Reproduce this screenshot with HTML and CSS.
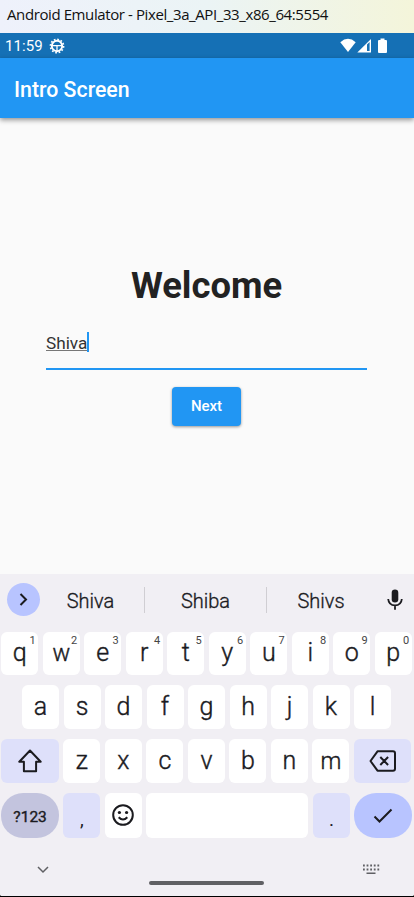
FILE: index.html
```
<!DOCTYPE html>
<html lang="en">
<head>
<meta charset="utf-8">
<title>Intro Screen</title>
<link rel="stylesheet" href="styles.css">
</head>
<body>
<div class="window">
  <div class="titlebar"><span>Android Emulator - Pixel_3a_API_33_x86_64:5554</span></div>
  <div class="status">
    <span class="clock">11:59</span>
    <svg class="gear" width="16" height="16" viewBox="0 0 16 16" fill="none" stroke="#fff"><circle cx="8" cy="8" r="5.2" stroke-width="1.900"/><circle cx="8" cy="8" r="6.600" stroke-width="1.600" stroke-dasharray="1.730 1.730"/><path d="M3 7.600h10M8 7.600V13" stroke-width="1.300"/></svg>
    <svg class="signals" width="48" height="16" viewBox="0 0 48 16" fill="#fff"><path d="M.3 4.200Q8-2.600 15.700 4.200L8 14z"/><path d="M17.300 14.500L31 1v13.500z"/><path d="M27 6.500L29.600 4v9H27z" fill="#1570b5"/><path d="M40.500.5h4V2H46q1 0 1 1v11q0 1-1 1h-7q-1 0-1-1V3q0-1 1-1h1.500z"/></svg>
  </div>
  <header class="appbar"><span>Intro Screen</span></header>
  <main class="content">
    <h1>Welcome</h1>
    <div class="field"><span class="value">Shiva</span><span class="caret"></span></div>
    <button class="next">Next</button>
  </main>
  <section class="keyboard">
    <div class="suggestions">
      <span class="expand"><svg width="33" height="33" viewBox="0 0 33 33" fill="none" stroke="#1b1b1f" stroke-width="2"><path d="M13.500 11l5.500 5.500-5.500 5.500"/></svg></span>
      <span class="word first">Shiva</span>
      <span class="word">Shiba</span>
      <span class="word last">Shivs</span>
      <svg class="mic" width="16" height="22" viewBox="0 0 16 22"><rect x="4.700" y=".5" width="6.600" height="13" rx="3.300" fill="#1b1b1f"/><path d="M1.200 10q.5 6.300 6.800 6.300T14.800 10M8 16v4.700" fill="none" stroke="#1b1b1f" stroke-width="1.800"/></svg>
    </div>
    <div class="row r1">
      <span class="key">q<i>1</i></span><span class="key broad">w<i>2</i></span><span class="key">e<i>3</i></span><span class="key">r<i>4</i></span><span class="key">t<i>5</i></span><span class="key">y<i>6</i></span><span class="key">u<i>7</i></span><span class="key">i<i>8</i></span><span class="key">o<i>9</i></span><span class="key">p<i>0</i></span>
    </div>
    <div class="row r2">
      <span class="key">a</span><span class="key">s</span><span class="key">d</span><span class="key">f</span><span class="key">g</span><span class="key">h</span><span class="key">j</span><span class="key">k</span><span class="key">l</span>
    </div>
    <div class="row r3">
      <span class="key wide tint"><svg width="26" height="24" viewBox="0 0 26 24" fill="none" stroke="#1b1b1f" stroke-width="2" stroke-linejoin="round"><path d="M13 1.500L2.300 12.700h4.600v9.600h12.200v-9.600h4.600z"/></svg></span>
      <span class="key">z</span><span class="key">x</span><span class="key">c</span><span class="key">v</span><span class="key">b</span><span class="key">n</span><span class="key broad">m</span>
      <span class="key wide tint"><svg width="28" height="22" viewBox="0 0 28 22" fill="none" stroke="#1b1b1f" stroke-width="2" stroke-linejoin="round"><path d="M8.500 1.300H24q2 0 2 2v15.400q0 2-2 2H8.500L1.500 11zM11.300 7l7.800 8M19.100 7l-7.800 8"/></svg></span>
    </div>
    <div class="row r4">
      <span class="key wide symbols">?123</span>
      <span class="key tint punct comma">,</span>
      <span class="key"><svg width="24" height="24" viewBox="0 0 24 24" fill="none" stroke="#1b1b1f" stroke-width="2"><circle cx="12" cy="12" r="9.800"/><path d="M7.700 14.200q4.300 4.600 8.600 0"/><g fill="#1b1b1f" stroke="none"><circle cx="8.400" cy="9.500" r="1.600"/><circle cx="15.600" cy="9.500" r="1.600"/></g></svg></span>
      <span class="key space"></span>
      <span class="key tint punct">.</span>
      <span class="key wide enter"><svg width="20" height="16" viewBox="0 0 20 16" fill="none" stroke="#1b1b1f" stroke-width="2"><path d="M1.500 8.500l5 5L18.500 1.500"/></svg></span>
    </div>
    <div class="nav">
      <svg class="down" width="12" height="8" viewBox="0 0 12 8" fill="none" stroke="#606064" stroke-width="1.500"><path d="M1 1l5 5 5-5"/></svg>
      <span class="handle"></span>
      <svg class="ime" width="18" height="11" viewBox="0 0 18 11" fill="none" stroke="#606064"><path d="M1 1.500h17M1 5.500h17" stroke-width="1.800" stroke-dasharray="1.800 1.800"/><path d="M4.500 9.300h9" stroke-width="1.500"/></svg>
    </div>
  </section>
</div>
</body>
</html>
```

FILE: styles.css
```
* { box-sizing: border-box; }
body { margin: 0; background: #000; font-family: Roboto, sans-serif; }
.window { width: 414px; height: 896px; display: flex; flex-direction: column; overflow: hidden; background: #fafafa; border-radius: 0 0 2px 2px; }
svg { display: block; flex: none; }
.titlebar { height: 33px; flex: none; padding: 3px 7px; font: 15px/22px "Open Sans", "Noto Sans", sans-serif; color: #111; background: linear-gradient(90deg, #eef1fb, #ebf4f5 50%, #f4f5da); white-space: nowrap; letter-spacing: -.4px; }
.status { height: 25px; flex: none; display: flex; align-items: center; padding: 0 26px 0 5px; background: #1570b5; color: #fff; }
.clock { font-size: 15px; line-height: 25px; letter-spacing: .1px; padding-top: 1px; }
.gear { margin-left: 6px; }
.signals { margin-left: auto; }
.appbar { height: 60px; flex: none; padding-left: 14px; background: #2196f3; color: #fff; font-size: 21.300px; font-weight: 500; line-height: 63px; box-shadow: 0 2px 5px rgba(0,0,0,.42); position: relative; }
.content { height: 456px; flex: none; display: flex; flex-direction: column; align-items: center; padding: 144px 1px 0 0; }
h1 { margin: 0; font-size: 36.400px; line-height: 47px; font-weight: 700; color: #222; }
.field { margin-top: 16px; width: 321px; height: 45px; border-bottom: 2px solid #2196f3; display: flex; align-items: flex-start; padding-top: 7px; font-size: 17.200px; line-height: 22px; color: #333; }
.value { border-bottom: 1px solid #777; height: 19px; }
.caret { width: 2px; height: 20px; margin-top: 0; background: #2196f3; }
.next { margin-top: 17px; width: 69px; height: 39px; border: 0; border-radius: 4px; background: #2196f3; color: #fff; font: 500 15px Roboto, sans-serif; box-shadow: 0 1px 3px rgba(0,0,0,.4); padding: 0 0 1px; }
.keyboard { height: 322px; flex: none; background: #f1eff4; color: #1b1b1f; }
.suggestions { height: 58px; display: flex; align-items: center; padding: 0 11px 7px 7px; font-size: 20px; font-weight: 300; -webkit-text-stroke: .35px; }
.expand { width: 33px; height: 33px; border-radius: 50%; background: #b8c4ff; }
.word { height: 26px; line-height: 28px; width: 122px; text-align: center; border-right: 1px solid #d0ced3; }
.word.first { width: 105px; padding-right: 3px; }
.word.last { width: 108px; border: 0; }
.mic { margin-left: auto; }
.row { display: flex; gap: 4.500px; padding: 0 1.300px; margin-bottom: 10px; height: 44px; }
.key { position: relative; flex: none; width: 37px; height: 100%; background: #fff; border-radius: 6px; display: flex; align-items: center; justify-content: center; font-size: 25px; font-weight: 300; -webkit-text-stroke: .4px; line-height: 30px; padding-bottom: 1px; }
.key.broad { font-size: 23.500px; }
.key i { position: absolute; top: 3px; right: 2.500px; font: 11px/12px Roboto, sans-serif; color: #444; -webkit-text-stroke: 0; }
.r1 { height: 43px; }
.r2 { padding-left: 22px; }
.r4 { height: 45px; }
.key.wide { width: 57.600px; padding: 0; }
.key.tint { background: #dee0fa; }
.key.symbols { border-radius: 22px; background: #c3c4de; font-size: 15.500px; font-weight: 400; padding-top: 2px; }
.key.enter { border-radius: 22px; background: #b8c4ff; }
.key.space { width: 162px; }
.key.punct { font-size: 19px; font-weight: 400; -webkit-text-stroke: 0; padding: 8px 0 0; }
.nav { height: 48px; display: grid; grid-template-columns: 149px 115px 150px; align-items: center; }
.down { margin: -5px 0 0 37px; }
.handle { height: 4px; border-radius: 2px; background: #606064; margin-top: 21px; }
.ime { margin: -5px 0 0 98px; }
```
